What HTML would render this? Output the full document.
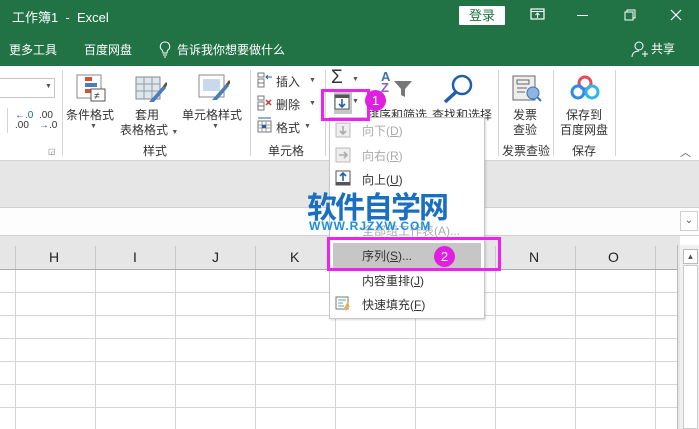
<!DOCTYPE html>
<html><head><meta charset="utf-8"><style>
*{margin:0;padding:0;box-sizing:border-box}
body{width:699px;height:429px;overflow:hidden;position:relative;background:#fff;font-family:"Liberation Sans","Noto Sans CJK SC",sans-serif;font-size:12px;color:#222}
.a{position:absolute;white-space:nowrap}
.w{color:#fff}
.vs{position:absolute;width:1px;background:#d4d4d4}
.lbl{position:absolute;font-size:12px;color:#333;white-space:nowrap}
.mi{position:absolute;left:362px;font-size:12px;color:#333}
.dis{color:#aaa}
</style></head><body>
<div class="a" style="left:0;top:0;width:699px;height:66px;background:#217346"></div>
<div class="a w" style="left:12px;top:7px;font-size:13px">工作簿1&nbsp; - &nbsp;Excel</div>
<div class="a" style="left:459px;top:6px;width:46px;height:19px;background:#fff;border-radius:1px;color:#217346;font-size:13px;text-align:center;line-height:19px">登录</div>
<svg class="a" style="left:530px;top:8px" width="16" height="14"><rect x="1" y="1" width="13" height="10" fill="none" stroke="#fff" stroke-width="1.2"/><line x1="1" y1="3.5" x2="14" y2="3.5" stroke="#fff"/><path d="M7.5 10V5M5.5 7l2-2 2 2" stroke="#fff" fill="none"/></svg>
<div class="a" style="left:577px;top:15px;width:11px;height:1px;background:#fff"></div>
<svg class="a" style="left:624px;top:9px" width="12" height="12"><rect x="1" y="3" width="8" height="8" fill="none" stroke="#fff"/><path d="M3 3V1h8v8H9" fill="none" stroke="#fff"/></svg>
<svg class="a" style="left:670px;top:9px" width="12" height="12"><path d="M1 1l10 10M11 1L1 11" stroke="#fff" stroke-width="1.2"/></svg>
<div class="a w" style="left:9px;top:41px;font-size:12px">更多工具</div>
<div class="a w" style="left:84px;top:41px;font-size:12px">百度网盘</div>
<svg class="a" style="left:159px;top:41px" width="12" height="17"><path d="M6 1a4.5 4.5 0 0 0-3 8c1 1 1 2 1 3h4c0-1 0-2 1-3A4.5 4.5 0 0 0 6 1zM4 14h4M5 16h2" fill="none" stroke="#fff"/></svg>
<div class="a w" style="left:177px;top:41px;font-size:12px">告诉我你想要做什么</div>
<svg class="a" style="left:631px;top:40px" width="18" height="18"><circle cx="8" cy="6" r="4" fill="none" stroke="#fff"/><path d="M1 17c0-4 3-6 7-6M11 14h6M14 11v6" fill="none" stroke="#fff"/></svg>
<div class="a w" style="left:651px;top:40px;font-size:12px">共享</div>
<!-- ribbon -->
<div class="a" style="left:0;top:66px;width:699px;height:94px;background:#fff"></div>
<div class="a" style="left:0;top:78px;width:55px;height:20px;border:1px solid #c6c6c6;border-left:none"></div>
<div class="a" style="left:45px;top:83px;font-size:7px;color:#555">▼</div>
<div class="a" style="left:15px;top:111px;font-size:10px;color:#1f5fa8;line-height:10px">←.0<br><span style="color:#333">.00</span></div>
<div class="a" style="left:39px;top:111px;font-size:10px;color:#333;line-height:10px">.00<br><span style="color:#1f5fa8">→</span>.0</div>
<div class="vs" style="left:7px;top:108px;height:25px"></div>
<div class="vs" style="left:62px;top:70px;height:86px"></div>
<div class="vs" style="left:250px;top:70px;height:86px"></div>
<div class="vs" style="left:325px;top:70px;height:86px"></div>
<div class="vs" style="left:498px;top:70px;height:86px"></div>
<div class="vs" style="left:553px;top:70px;height:86px"></div>
<div class="vs" style="left:615px;top:70px;height:86px"></div>
<svg class="a" style="left:76px;top:74px" width="32" height="28"><rect x="1" y="1" width="24" height="23" fill="#fff" stroke="#888"/><rect x="9" y="3" width="7" height="4" fill="#d35230"/><rect x="9" y="9" width="12" height="4" fill="#4a7ebb"/><rect x="9" y="15" width="7" height="4" fill="#d35230"/><rect x="15" y="15" width="14" height="12" fill="#fff" stroke="#555"/><text x="18" y="25" font-size="10" fill="#333">≠</text></svg>
<div class="lbl" style="left:66px;top:106px">条件格式</div><div class="a" style="left:90px;top:123px;font-size:7px;color:#555">▼</div>
<svg class="a" style="left:135px;top:76px" width="32" height="28"><rect x="1" y="1" width="24" height="22" fill="#dce6f0" stroke="#888"/><path d="M1 8h24M1 15h24M9 1v22M17 1v22" stroke="#999"/><path d="M14 26l14-16 3 2-12 14z" fill="#4a7ebb"/><path d="M28 10l3-4 2 2-3 4z" fill="#555"/></svg>
<div class="lbl" style="left:135px;top:106px">套用</div>
<div class="lbl" style="left:120px;top:121px">表格格式 <span style="font-size:7px;color:#555">▼</span></div>
<svg class="a" style="left:198px;top:74px" width="32" height="28"><rect x="1" y="1" width="25" height="22" fill="#fff" stroke="#888"/><rect x="5" y="5" width="17" height="12" fill="#c9d9ec"/><path d="M14 26l14-16 3 2-12 14z" fill="#4a7ebb"/><path d="M28 10l3-4 2 2-3 4z" fill="#555"/></svg>
<div class="lbl" style="left:182px;top:106px">单元格样式</div><div class="a" style="left:212px;top:123px;font-size:7px;color:#555">▼</div>
<div class="lbl" style="left:143px;top:142px">样式</div>
<div class="a" style="left:48px;top:147px;font-size:8px;color:#777">◲</div>
<svg class="a" style="left:257px;top:72px" width="16" height="16"><rect x="1" y="1" width="6" height="4" fill="none" stroke="#777"/><rect x="1" y="7" width="6" height="4" fill="none" stroke="#777"/><rect x="1" y="11" width="6" height="4" fill="none" stroke="#777"/><path d="M15 5H9M11 3l-2 2 2 2" stroke="#1f5fa8" fill="none"/></svg>
<div class="lbl" style="left:276px;top:73px">插入</div><div class="a" style="left:309px;top:77px;font-size:7px;color:#555">▼</div>
<svg class="a" style="left:257px;top:95px" width="16" height="16"><rect x="1" y="1" width="6" height="4" fill="none" stroke="#777"/><rect x="1" y="7" width="6" height="4" fill="none" stroke="#777"/><rect x="1" y="11" width="6" height="4" fill="none" stroke="#777"/><path d="M9 5l5 5M14 5l-5 5" stroke="#d32f2f" stroke-width="1.5"/></svg>
<div class="lbl" style="left:276px;top:96px">删除</div><div class="a" style="left:309px;top:100px;font-size:7px;color:#555">▼</div>
<svg class="a" style="left:257px;top:117px" width="16" height="16"><rect x="1" y="4" width="13" height="11" fill="none" stroke="#777"/><path d="M1 8h13M1 11h13M5 4v11M9 4v11" stroke="#999"/><rect x="5" y="8" width="4" height="3" fill="#1f5fa8"/><path d="M1 1h13" stroke="#1f5fa8"/></svg>
<div class="lbl" style="left:276px;top:119px">格式</div><div class="a" style="left:304px;top:123px;font-size:7px;color:#555">▼</div>
<div class="lbl" style="left:268px;top:142px">单元格</div>
<div class="a" style="left:331px;top:67px;font-size:19px;color:#333">Σ</div><div class="a" style="left:352px;top:76px;font-size:7px;color:#555">▼</div>
<div class="a" style="left:334px;top:91px;width:18px;height:23px;background:#c6c6c6"></div>
<svg class="a" style="left:334px;top:94px" width="16" height="16"><rect x="1" y="1" width="14" height="14" fill="#fff" stroke="#555"/><rect x="1" y="1" width="14" height="3" fill="#555"/><path d="M8 5v8M5 10l3 3 3-3" stroke="#1f5fa8" stroke-width="1.6" fill="none"/></svg>
<div class="a" style="left:352px;top:98px;font-size:7px;color:#555">▼</div>
<div class="a" style="left:381px;top:71px;font-size:13px;color:#3c73b5;line-height:11px;font-weight:bold">A<br><span style="color:#8e5fb5">Z</span></div>
<svg class="a" style="left:393px;top:80px" width="20" height="18"><path d="M1 1h18l-7 8v8l-4-2V9z" fill="#777"/></svg>
<svg class="a" style="left:442px;top:72px" width="34" height="32"><circle cx="20" cy="13" r="9" fill="none" stroke="#1f5fa8" stroke-width="2.5"/><path d="M14 20L3 30" stroke="#1f5fa8" stroke-width="3.5"/></svg>
<div class="lbl" style="left:367px;top:106px">排序和筛选</div>
<div class="lbl" style="left:432px;top:106px">查找和选择</div>
<svg class="a" style="left:510px;top:74px" width="34" height="30"><rect x="3" y="2" width="22" height="24" fill="#eee" stroke="#666"/><rect x="7" y="6" width="12" height="4" fill="none" stroke="#666"/><path d="M7 14h10M7 18h8" stroke="#666"/><circle cx="23" cy="19" r="6" fill="#8ab6e0" stroke="#3c73b5"/><path d="M27 23l4 4" stroke="#3c73b5" stroke-width="2"/></svg>
<div class="lbl" style="left:513px;top:106px">发票</div><div class="lbl" style="left:513px;top:121px">查验</div>
<div class="lbl" style="left:502px;top:142px">发票查验</div>
<svg class="a" style="left:569px;top:75px" width="32" height="26"><circle cx="16" cy="8" r="6" fill="none" stroke="#e24d5b" stroke-width="3"/><circle cx="9" cy="17" r="6" fill="none" stroke="#2d8ce8" stroke-width="3"/><circle cx="23" cy="17" r="6" fill="none" stroke="#2fb6e8" stroke-width="3"/></svg>
<div class="lbl" style="left:566px;top:106px">保存到</div><div class="lbl" style="left:560px;top:121px">百度网盘</div>
<div class="lbl" style="left:572px;top:142px">保存</div>
<div class="a" style="left:680px;top:144px;font-size:11px;color:#555">︿</div>
<div class="a" style="left:0;top:160px;width:699px;height:47px;background:#e6e6e6;border-top:1px solid #d4d4d4"></div>
<div class="a" style="left:0;top:207px;width:699px;height:29px;background:#fdfdfd;border-top:1px solid #d0d0d0;border-bottom:1px solid #d0d0d0"></div>
<div class="a" style="left:680px;top:211px;width:18px;height:20px;border:1px solid #d0d0d0;background:#fff;font-size:10px;color:#555;text-align:center;line-height:18px">⌄</div>
<div class="a" style="left:0;top:236px;width:680px;height:34px;background:#e6e6e6;border-bottom:1px solid #ababab"></div>
<div style="position:absolute;left:0;top:245px">
<div class="a" style="left:15px;top:1px;width:1px;height:23px;background:#c8c8c8"></div>
<div class="a" style="left:95px;top:1px;width:1px;height:23px;background:#c8c8c8"></div>
<div class="a" style="left:175px;top:1px;width:1px;height:23px;background:#c8c8c8"></div>
<div class="a" style="left:255px;top:1px;width:1px;height:23px;background:#c8c8c8"></div>
<div class="a" style="left:415px;top:1px;width:1px;height:23px;background:#c8c8c8"></div>
<div class="a" style="left:495px;top:1px;width:1px;height:23px;background:#c8c8c8"></div>
<div class="a" style="left:575px;top:1px;width:1px;height:23px;background:#c8c8c8"></div>
<div class="a" style="left:655px;top:1px;width:1px;height:23px;background:#c8c8c8"></div>
<div class="a" style="left:49px;top:4px;font-size:14px;color:#222">H</div>
<div class="a" style="left:133px;top:4px;font-size:14px;color:#222">I</div>
<div class="a" style="left:212px;top:4px;font-size:14px;color:#222">J</div>
<div class="a" style="left:290px;top:4px;font-size:14px;color:#222">K</div>
<div class="a" style="left:529px;top:4px;font-size:14px;color:#222">N</div>
<div class="a" style="left:608px;top:4px;font-size:14px;color:#222">O</div>
</div>
<div class="a" style="left:0;top:270px;width:677px;height:159px;background-image:linear-gradient(to right,#d4d4d4 1px,transparent 1px),linear-gradient(to bottom,#d4d4d4 1px,transparent 1px);background-size:80px 23px;background-position:15px 0,0 22px"></div>
<div class="a" style="left:677px;top:245px;width:3px;height:184px;background:#e6e6e6;border-left:1px solid #bbb"></div>
<div class="a" style="left:680px;top:245px;width:19px;height:184px;background:#f0f0f0"></div>
<div class="a" style="left:683px;top:249px;width:15px;height:15px;background:#fff;border:1px solid #bbb;font-size:8px;text-align:center;line-height:13px;color:#555">▲</div>
<div class="a" style="left:683px;top:265px;width:15px;height:164px;background:#fff;border:1px solid #ccc"></div>
<div class="a" style="left:329px;top:117px;width:156px;height:202px;background:#fff;border:1px solid #c6c6c6;box-shadow:1px 1px 2px rgba(0,0,0,.15)"></div>
<svg class="a" style="left:335px;top:122px" width="16" height="16"><rect x="1" y="1" width="14" height="14" fill="#eee" stroke="#bbb"/><path d="M8 4v8M5 9l3 3 3-3" stroke="#aaa" stroke-width="1.6" fill="none"/></svg>
<div class="mi dis" style="top:122px">向下(<u>D</u>)</div>
<svg class="a" style="left:335px;top:147px" width="16" height="16"><rect x="1" y="1" width="14" height="14" fill="#eee" stroke="#bbb"/><path d="M4 8h8M9 5l3 3-3 3" stroke="#aaa" stroke-width="1.6" fill="none"/></svg>
<div class="mi dis" style="top:147px">向右(<u>R</u>)</div>
<svg class="a" style="left:335px;top:170px" width="16" height="16"><rect x="1" y="1" width="14" height="14" fill="#fff" stroke="#555"/><rect x="1" y="12" width="14" height="3" fill="#555"/><path d="M8 11V3M5 6l3-3 3 3" stroke="#1f5fa8" stroke-width="1.6" fill="none"/></svg>
<div class="mi" style="top:171px">向上(<u>U</u>)</div>
<div class="mi dis" style="top:222px;font-size:12px">全部组工作表(A)...</div>
<div class="a" style="left:333px;top:243px;width:148px;height:25px;background:#c6c6c6"></div>
<div class="mi" style="top:247px">序列(<u>S</u>)...</div>
<div class="mi" style="top:272px">内容重排(<u>J</u>)</div>
<svg class="a" style="left:335px;top:296px" width="16" height="16"><rect x="1" y="1" width="12" height="12" fill="none" stroke="#777"/><path d="M3 4h8M3 7h5M3 10h6" stroke="#5a9"/><path d="M12 7l-3 5h3l-2 4 5-6h-3l2-3z" fill="#f0b03c"/></svg>
<div class="mi" style="top:296px">快速填充(<u>F</u>)</div>
<div class="a" style="left:307px;top:183px;font-size:30px;font-weight:bold;color:#1a6fbf;letter-spacing:-2px">软件自学网</div>
<div class="a" style="left:309px;top:219px;font-size:12px;font-weight:bold;color:#1a8fe0;letter-spacing:1px">WWW.RJZXW.COM</div>
<div class="a" style="left:321px;top:89px;width:49px;height:32px;border:3px solid #ee22ee"></div>
<div class="a" style="left:365px;top:90px;width:21px;height:21px;border-radius:50%;background:#e020e0;color:#fff;text-align:center;line-height:21px;font-size:13px">1</div>
<div class="a" style="left:327px;top:237px;width:174px;height:34px;border:3px solid #ee22ee"></div>
<div class="a" style="left:434px;top:246px;width:21px;height:21px;border-radius:50%;background:#e020e0;color:#fff;text-align:center;line-height:21px;font-size:13px">2</div>
</body></html>
